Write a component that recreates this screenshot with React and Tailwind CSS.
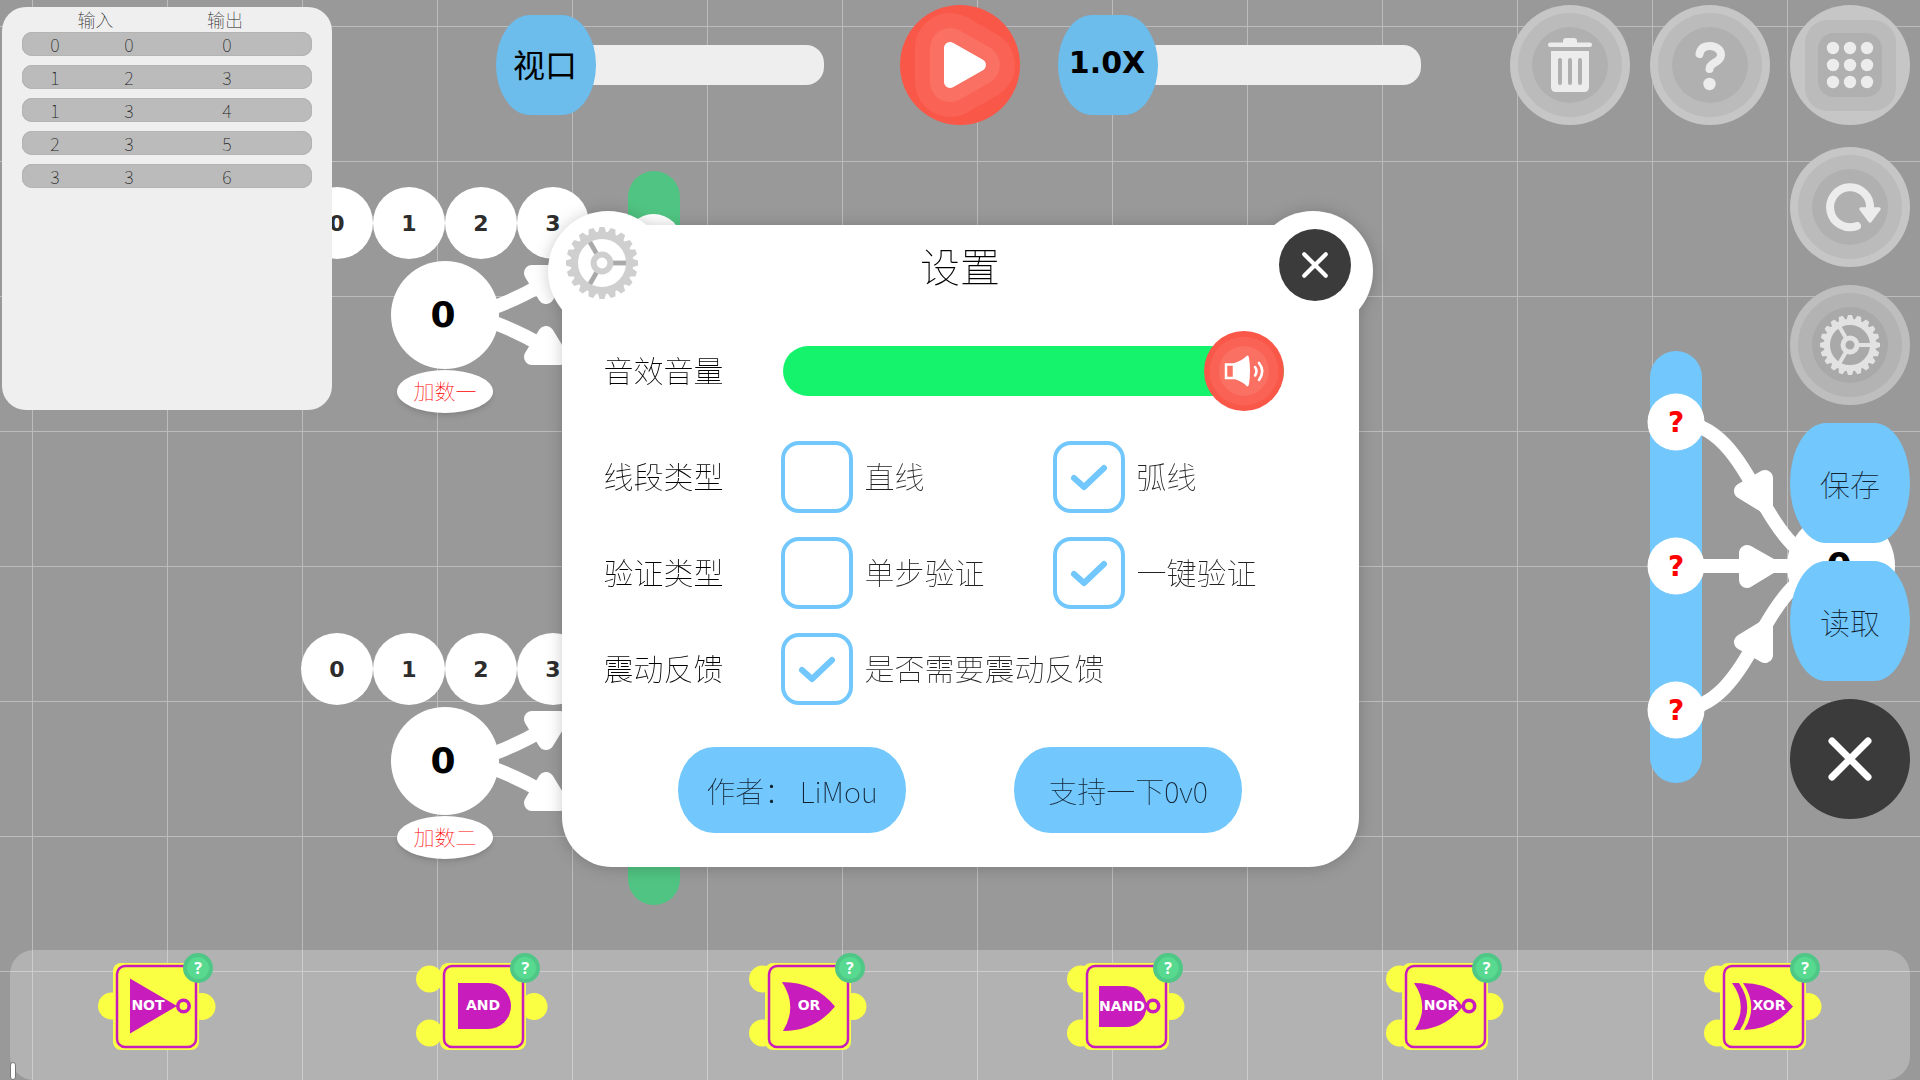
import { useState } from 'react';

const TRUTH_ROWS = [
  [0, 0, 0],
  [1, 2, 3],
  [1, 3, 4],
  [2, 3, 5],
  [3, 3, 6],
];

// nodes of the circuit, in canvas pixels (centre points)
const INPUTS = [
  { id: 'a', label: '加数一', x: 445, y: 315 },
  { id: 'b', label: '加数二', x: 445, y: 761 },
];
const SOCKETS = [422, 566, 710];

const GATES = [
  { name: 'NOT', w: 118, box: 15, inputs: [43], text: 35, base: 47, bubble: 70.5, d: 'M17 15.5L64 43L17 70.5Z' },
  { name: 'AND', w: 132, box: 24, inputs: [16, 70], text: 43, base: 47, d: 'M18 20H48A23 23 0 0 1 48 66H18Z' },
  { name: 'OR', w: 118, box: 16, inputs: [16, 70], text: 44, base: 47, d: 'M17 19Q50 19 70 43.5Q50 68 18 68Q33 43.5 17 19Z' },
  { name: 'NAND', w: 118, box: 16, inputs: [16, 70], text: 39, base: 48, bubble: 70, d: 'M16 23H43A20.5 20.5 0 0 1 43 64H16Z' },
  { name: 'NOR', w: 118, box: 16, inputs: [16, 70], text: 39, base: 47, bubble: 67, d: 'M12 20Q42 20 61 43.5Q42 67 13 67Q28 43.5 12 20Z' },
  {
    name: 'XOR', w: 118, box: 16, inputs: [16, 70], text: 49, base: 47,
    d: 'M12 20H19Q35 43.5 20 67H13Q29 43.5 12 20ZM23 20Q53 20 73 43.5Q53 67 24 67Q39 43.5 23 20Z',
  },
];

function Rings({ tone = 'light' }) {
  const fills = tone === 'dim' ? ['#bebebe', '#b3b3b3', '#a9a9a9'] : ['#c6c6c6', '#bbbbbb', '#b0b0b0'];
  return (
    <>
      <circle cx="60" cy="60" r="60" fill={fills[0]} />
      <circle cx="60" cy="60" r="52" fill={fills[1]} />
      <circle cx="60" cy="60" r="38" fill={fills[2]} />
    </>
  );
}

function Gear({ color, spoke }) {
  const teeth = Array.from({ length: 20 }, (_, i) => i * 18);
  return (
    <g transform="translate(60 60)">
      {teeth.map((deg) => (
        <path key={deg} d="M-4 -24L-2 -30H2L4 -24Z" fill={color} transform={`rotate(${deg})`} />
      ))}
      {[0, 120, 240].map((deg) => (
        <path key={deg} d="M9 0H22" stroke={spoke} strokeWidth="4" transform={`rotate(${deg})`} />
      ))}
      <circle r="23" fill="none" stroke={color} strokeWidth="6" />
      <circle r="7" fill="none" stroke={color} strokeWidth="5" />
    </g>
  );
}

function RoundButton({ label, children }) {
  return (
    <button type="button" aria-label={label} className="block size-30 shrink-0 rounded-full">
      <svg viewBox="0 0 120 120" className="size-full">{children}</svg>
    </button>
  );
}

function Cross() {
  return (
    <>
      <circle cx="60" cy="60" r="60" fill="#3b3b3b" />
      <path d="M42 42L78 78M78 42L42 78" stroke="#fff" strokeWidth="7" strokeLinecap="round" />
    </>
  );
}

function TruthTable() {
  return (
    <section className="h-[403px] w-[330px] shrink-0 rounded-3xl bg-[#efefef] px-5 text-[#222]">
      <table className="block text-lg/6 font-thin">
        <thead className="block h-[25px]">
          <tr className="grid grid-cols-[147px_112px] text-center">
            <th className="font-thin">输入</th>
            <th className="font-thin">输出</th>
          </tr>
        </thead>
        <tbody className="flex flex-col gap-[9px]">
          {TRUTH_ROWS.map((row, i) => (
            <tr
              key={i}
              className="grid grid-cols-[66px_82px_114px] rounded-[10px] bg-[#bbb] text-center shadow-[inset_0_0_1px_#777]"
            >
              {row.map((value, j) => (
                <td key={j}>{value}</td>
              ))}
            </tr>
          ))}
        </tbody>
      </table>
    </section>
  );
}

function BubbleSlider({ name, children, className }) {
  const [value, setValue] = useState(0);
  return (
    <label className={`grid items-center ${className}`}>
      <input
        type="range"
        aria-label={name}
        value={value}
        onChange={(e) => setValue(Number(e.target.value))}
        className="col-start-1 row-start-1 ml-5 h-10 appearance-none rounded-[18px] bg-[#eee] [&::-webkit-slider-thumb]:opacity-0"
      />
      <span className="pointer-events-none z-10 col-start-1 row-start-1 flex size-25 items-center justify-center rounded-[34%/50%] bg-[#6cbcec] pr-0.5 pb-1 text-black">
        {children}
      </span>
    </label>
  );
}

function SideButton({ children }) {
  return (
    <button type="button" className="size-30 rounded-[30%/50%] bg-[#72c7fc] text-3xl font-thin text-[#123]">
      {children}
    </button>
  );
}

function Canvas() {
  return (
    <div className="absolute inset-0 overflow-hidden bg-[#999] bg-[linear-gradient(to_right,#bcbcbc_1px,transparent_1px),linear-gradient(to_bottom,#bcbcbc_1px,transparent_1px)] bg-[size:135px_135px] bg-[position:32px_26px]">
      <div className="absolute top-[171px] left-[628px] h-[734px] w-13 rounded-full bg-[#50c482]" />
      <div className="absolute top-[351px] left-[1650px] h-[432px] w-13 rounded-full bg-[#72c7fc]" />
      <div className="absolute top-[214px] left-[625px] size-[57px] rounded-full bg-white" />

      <svg className="absolute inset-0 size-full" fill="none" stroke="#fff" strokeLinejoin="round">
        {INPUTS.map((n) => (
          <g key={n.id} transform={`translate(${n.x} ${n.y})`}>
            <path d="M50 -8Q76 -18 96 -30M50 8Q76 18 96 30" strokeWidth="14" />
            <path d="M87 -42L101 -19L115 -42ZM87 42L101 19L115 42Z" fill="#fff" strokeWidth="16" />
          </g>
        ))}
        <path
          d="M1676 422C1758 422 1758 566 1841 566M1676 566H1841M1676 710C1758 710 1758 566 1841 566"
          strokeWidth="14"
        />
        <path
          d="M1742 491L1765 478V505ZM1747 553V580L1770 566ZM1742 642L1765 655V628Z"
          fill="#fff"
          strokeWidth="16"
        />
      </svg>

      {INPUTS.map((n) => (
        <div
          key={n.id}
          className="absolute flex -translate-x-1/2 flex-col items-center font-['DejaVu_Sans',sans-serif] font-bold"
          style={{ left: n.x, top: n.y - 128 }}
        >
          <div className="flex text-[22px] text-[#2d2d2d]">
            {[0, 1, 2, 3].map((d) => (
              <span key={d} className="flex size-18 items-center justify-center rounded-full bg-white">{d}</span>
            ))}
          </div>
          <span className="mt-0.5 flex size-27 items-center justify-center rounded-full bg-white pr-1 text-4xl text-black">
            0
          </span>
          <span className="mt-px flex h-[43px] w-24 items-center justify-center rounded-[50%] bg-white pb-0.5 font-['Noto_Sans_CJK_SC',sans-serif] text-[21px] font-thin text-[#f00] shadow-md">
            {n.label}
          </span>
        </div>
      ))}

      {SOCKETS.map((y) => (
        <span
          key={y}
          className="absolute left-[1676px] flex size-[57px] -translate-1/2 items-center justify-center rounded-full bg-white font-['DejaVu_Sans',sans-serif] text-[28px] font-bold text-[#f00]"
          style={{ top: y }}
        >
          ?
        </span>
      ))}
      <span className="absolute top-[512px] left-[1787px] flex size-27 items-center justify-center rounded-full bg-white pr-1 font-['DejaVu_Sans',sans-serif] text-4xl font-bold text-black">
        0
      </span>
    </div>
  );
}

function Gate({ gate }) {
  // the badge is centred on the right edge of the box
  const badgeLeft = gate.box + 70;
  return (
    <div className="relative shrink-0">
      <svg width={gate.w} height="87" viewBox={`0 0 ${gate.w} 87`}>
        <g fill="#fbff43">
          {gate.inputs.map((y) => (
            <circle key={y} cx="13.5" cy={y} r="13.5" />
          ))}
          <circle cx={gate.w - 14} cy="43.5" r="13.5" />
          <rect x={gate.box} width="86" height="87" rx="8" />
        </g>
        <g transform={`translate(${gate.box} 0)`}>
          <rect x="4" y="3" width="79" height="81" rx="8" fill="none" stroke="#c91cbc" strokeWidth="2.5" />
          <path d={gate.d} fill="#c91cbc" />
          {gate.bubble && (
            <circle cx={gate.bubble} cy="43" r="5.7" fill="#fbff43" stroke="#c91cbc" strokeWidth="3.6" />
          )}
          <text
            x={gate.text}
            y={gate.base}
            textAnchor="middle"
            fill="#fff"
            className="font-['DejaVu_Sans',sans-serif] text-sm font-bold"
          >
            {gate.name}
          </text>
        </g>
      </svg>
      <button
        type="button"
        className="absolute -top-2.5 flex size-7.5 items-center justify-center rounded-full border-4 border-[#4fc786] bg-[#57d98f] font-['Open_Sans',sans-serif] text-base font-bold text-white"
        style={{ left: badgeLeft }}
      >
        ?
      </button>
    </div>
  );
}

function Option({ label, checked, onChange, className = '' }) {
  return (
    <label className={`flex items-center gap-3 whitespace-nowrap text-[#222] ${className}`}>
      <span className="relative size-18 shrink-0">
        <input
          type="checkbox"
          checked={checked}
          onChange={onChange}
          className="peer block size-full appearance-none rounded-[18px] border-4 border-[#72c7fc] bg-white"
        />
        <svg
          viewBox="0 0 72 72"
          className="pointer-events-none absolute inset-0 hidden peer-checked:block"
          fill="none"
          stroke="#72c7fc"
          strokeWidth="6"
          strokeLinecap="round"
          strokeLinejoin="round"
        >
          <path d="M21 37L31 46L51 27" />
        </svg>
      </span>
      <span className="pb-1">{label}</span>
    </label>
  );
}

function SettingsDialog() {
  const [volume, setVolume] = useState(100);
  const [curved, setCurved] = useState(true);
  const [oneClick, setOneClick] = useState(true);
  const [vibrate, setVibrate] = useState(true);

  return (
    <div
      role="dialog"
      aria-labelledby="settings-title"
      className="relative w-[797px] drop-shadow-[0_1px_8px_rgba(0,0,0,0.2)]"
    >
      <div className="absolute -top-3.5 -left-3.5 size-30 rounded-full bg-white" />
      <div className="absolute -top-3.5 -right-3.5 size-30 rounded-full bg-white" />
      <svg viewBox="30 30 60 60" className="absolute top-0.5 left-1 z-10 size-18">
        <Gear color="#cfcfcf" spoke="#a9a9a9" />
      </svg>
      <button type="button" aria-label="关闭" className="absolute top-1 right-2 z-10 size-18 rounded-full">
        <svg viewBox="0 0 120 120"><Cross /></svg>
      </button>

      <div className="relative rounded-[50px] bg-white px-[42px] pt-2.5 pb-[34px] text-3xl font-thin text-black">
        <h1 id="settings-title" className="mb-9 text-center text-[40px]/[60px] font-thin">设置</h1>

        <div className="grid grid-cols-[177px_503px] items-center">
          <label htmlFor="volume" className="pb-1">音效音量</label>
          <div className="grid items-center">
            <input
              id="volume"
              type="range"
              value={volume}
              onChange={(e) => setVolume(Number(e.target.value))}
              className="col-start-1 row-start-1 ml-0.5 h-[50px] appearance-none rounded-full bg-[#15f26b] [&::-webkit-slider-thumb]:opacity-0"
            />
            <svg viewBox="0 0 80 80" className="pointer-events-none col-start-1 row-start-1 size-20 justify-self-end">
              <circle cx="40" cy="40" r="40" fill="#f95748" />
              <circle cx="40" cy="40" r="34.5" fill="#f96254" />
              <circle cx="40" cy="40" r="25" fill="#fa7062" />
              <path d="M22 33.5H30V47H22Z" fill="none" stroke="#fff" strokeWidth="2.5" />
              <path d="M29 32.5Q38 30 42.5 25Q44.5 23.5 45 27Q47 40 45 53Q44.5 56.5 42.5 55Q38 50 29 47.5Z" fill="#fff" />
              <path d="M51 36Q54 40 51 44.5M55 32Q61.5 40 55 49" fill="none" stroke="#fff" strokeWidth="2.6" strokeLinecap="round" />
            </svg>
          </div>
        </div>

        <div className="mt-[30px] grid grid-cols-[177px_272px_1fr] items-center gap-y-6">
          <span className="pb-1">线段类型</span>
          <Option label="直线" checked={!curved} onChange={() => setCurved(false)} />
          <Option label="弧线" checked={curved} onChange={() => setCurved(true)} />
          <span className="pb-1">验证类型</span>
          <Option label="单步验证" checked={!oneClick} onChange={() => setOneClick(false)} />
          <Option label="一键验证" checked={oneClick} onChange={() => setOneClick(true)} />
          <span className="pb-1">震动反馈</span>
          <Option
            label="是否需要震动反馈"
            checked={vibrate}
            onChange={() => setVibrate(!vibrate)}
            className="col-span-2"
          />
        </div>

        <div className="mt-[42px] flex justify-center gap-27 text-[29px] text-[#123]">
          <button type="button" className="h-[86px] w-57 rounded-[36px/50%] bg-[#72c7fc]">作者： LiMou</button>
          <button type="button" className="h-[86px] w-57 rounded-[36px/50%] bg-[#72c7fc]">支持一下0v0</button>
        </div>
      </div>
    </div>
  );
}

export default function App() {
  return (
    <div className="relative flex min-h-screen flex-col overflow-hidden font-['Noto_Sans_CJK_SC',sans-serif]">
      <Canvas />

      <header className="relative grid grid-cols-[1fr_auto_1fr] items-start pt-[5px]">
        <div className="flex items-start justify-between pt-0.5 pr-19 pl-0.5">
          <TruthTable />
          <BubbleSlider name="视口" className="mt-2 w-82 text-[32px]">视口</BubbleSlider>
        </div>

        <RoundButton label="运行">
          <circle cx="60" cy="60" r="60" fill="#f95748" />
          <g strokeLinejoin="round">
            <path d="M50 43V77L80 60Z" fill="#f96254" stroke="#f96254" strokeWidth="70" />
            <path d="M50 43V77L80 60Z" fill="#fa7062" stroke="#fa7062" strokeWidth="40" />
            <path d="M50 43V77L80 60Z" fill="#fff" stroke="#fff" strokeWidth="12" />
          </g>
        </RoundButton>

        <div className="flex items-start justify-between pr-2.5 pl-[38px]">
          <BubbleSlider
            name="速度"
            className="mt-2.5 w-[363px] font-['DejaVu_Sans',sans-serif] text-3xl font-bold"
          >
            1.0X
          </BubbleSlider>
          <div className="flex items-start gap-5">
            <RoundButton label="删除">
              <Rings />
              <rect x="53" y="33" width="14" height="9" rx="3" fill="#ececec" />
              <rect x="38" y="37.5" width="44" height="4.5" rx="2.2" fill="#ececec" />
              <path d="M41 46H79V82Q79 87 74 87H46Q41 87 41 82Z" fill="#ececec" />
              <path d="M50 55V78M60 55V78M70 55V78" stroke="#b0b0b0" strokeWidth="4" strokeLinecap="round" />
            </RoundButton>
            <RoundButton label="帮助">
              <Rings />
              <path
                d="M49.5 49C50.5 43 55 41 60 41C66.500 41 71 45 71 50C71 58 59.5 57 59.5 64"
                fill="none"
                stroke="#ececec"
                strokeWidth="8"
                strokeLinecap="round"
              />
              <circle cx="59.5" cy="79" r="6.2" fill="#ececec" />
            </RoundButton>
            <div className="flex flex-col gap-[18px]">
              <div className="mb-1">
                <RoundButton label="菜单">
                  <circle cx="60" cy="60" r="60" fill="#c6c6c6" />
                  <rect x="15" y="15" width="91" height="91" rx="23" fill="#bbbbbb" />
                  <rect x="28" y="28" width="64" height="64" rx="16" fill="#b0b0b0" />
                  {[43, 60, 77].map((y) =>
                    [43, 60, 77].map((x) => <circle key={`${x}-${y}`} cx={x} cy={y} r="6.2" fill="#ececec" />)
                  )}
                </RoundButton>
              </div>
              <RoundButton label="重置">
                <Rings />
                <path d="M80 62A20 20 0 1 0 67 79" fill="none" stroke="#ececec" strokeWidth="8" strokeLinecap="round" />
                <path d="M71 62H89L80 74Z" fill="#ececec" stroke="#ececec" strokeWidth="3.5" strokeLinejoin="round" />
              </RoundButton>
              <RoundButton label="设置">
                <Rings tone="dim" />
                <Gear color="#e2e2e2" spoke="#e2e2e2" />
              </RoundButton>
              <SideButton>保存</SideButton>
              <SideButton>读取</SideButton>
              <RoundButton label="退出"><Cross /></RoundButton>
            </div>
          </div>
        </div>
      </header>

      <footer className="relative mx-2.5 mt-auto flex h-[130px] items-start justify-between rounded-[24px] bg-white/25 px-[88px] pt-[13px]">
        {GATES.map((gate) => (
          <Gate key={gate.name} gate={gate} />
        ))}
        <span className="absolute bottom-0 left-0 h-[18px] w-1.5 rounded-full border border-[#777] bg-white" />
      </footer>

      <div className="absolute inset-0 flex items-center justify-center pt-3">
        <SettingsDialog />
      </div>
    </div>
  );
}
